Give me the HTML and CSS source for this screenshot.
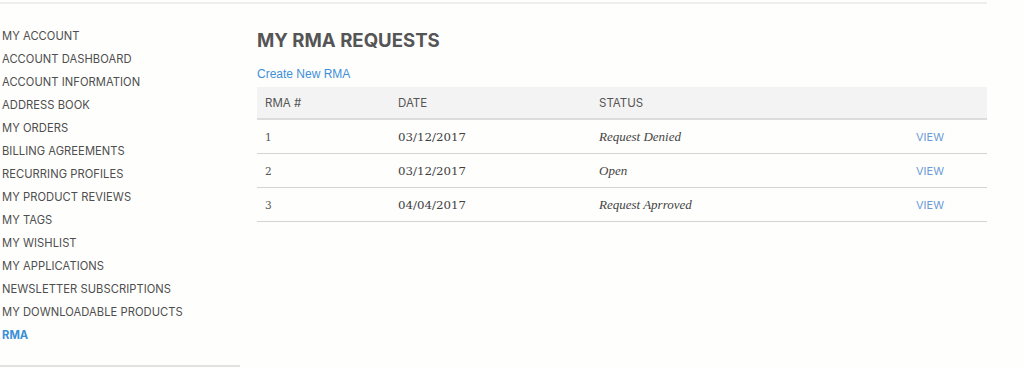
FILE: index.html
```html
<!DOCTYPE html>
<html>
<head>
<meta charset="utf-8">
<link rel="stylesheet" href="styles.css">
</head>
<body>
<div class="topline"></div>
<div class="page">
  <aside class="sidebar">
    <ul class="nav">
      <li>MY ACCOUNT</li>
      <li>ACCOUNT DASHBOARD</li>
      <li>ACCOUNT INFORMATION</li>
      <li>ADDRESS BOOK</li>
      <li>MY ORDERS</li>
      <li>BILLING AGREEMENTS</li>
      <li>RECURRING PROFILES</li>
      <li>MY PRODUCT REVIEWS</li>
      <li>MY TAGS</li>
      <li>MY WISHLIST</li>
      <li>MY APPLICATIONS</li>
      <li>NEWSLETTER SUBSCRIPTIONS</li>
      <li>MY DOWNLOADABLE PRODUCTS</li>
      <li class="active">RMA</li>
    </ul>
    <div class="sidebar-rule"></div>
  </aside>
  <main class="main">
    <h1 class="title">MY RMA REQUESTS</h1>
    <a class="create">Create New RMA</a>
    <table class="rma">
      <thead>
        <tr><th class="c1">RMA #</th><th class="c2">DATE</th><th class="c3">STATUS</th><th class="c4"></th></tr>
      </thead>
      <tbody>
        <tr><td class="num">1</td><td class="date">03/12/2017</td><td class="status">Request Denied</td><td class="view">VIEW</td></tr>
        <tr><td class="num">2</td><td class="date">03/12/2017</td><td class="status">Open</td><td class="view">VIEW</td></tr>
        <tr><td class="num">3</td><td class="date">04/04/2017</td><td class="status">Request Aprroved</td><td class="view">VIEW</td></tr>
      </tbody>
    </table>
  </main>
</div>
</body>
</html>
```
FILE: styles.css
```css
html, body {
  margin: 0;
  padding: 0;
  background: #fefefd;
}
body {
  font-family: "Inter", "Liberation Sans", sans-serif;
  color: #555;
}
.topline {
  width: 987px;
  height: 2px;
  margin-top: 2px;
  background: #eeeeee;
}
.page {
  display: flex;
  padding-top: 21px;
}
.sidebar {
  width: 240px;
  flex: none;
}
.nav {
  list-style: none;
  margin: 0;
  padding: 0 0 0 2px;
}
.nav li {
  font-size: 11.2px;
  line-height: 23px;
  height: 23px;
  color: #4e4e4e;
  letter-spacing: 0.05px;
}
.nav li.active {
  color: #3a8fd6;
  font-weight: 700;
}
.sidebar-rule {
  margin-top: 18px;
  height: 2px;
  background: #e2e2e2;
}
.main {
  margin-left: 17px;
  width: 730px;
}
.title {
  margin: 2px 0 0 0;
  font-size: 18.6px;
  line-height: 26px;
  font-weight: 700;
  color: #555;
  letter-spacing: 0;
}
.create {
  display: block;
  margin-top: 14px;
  font-family: "Liberation Sans", sans-serif;
  font-size: 12px;
  line-height: 14px;
  color: #3f8fd8;
}
.rma {
  margin-top: 6px;
  width: 730px;
  border-collapse: collapse;
  table-layout: fixed;
}
.rma th {
  background: #f3f3f3;
  text-align: left;
  font-weight: 400;
  font-size: 11.5px;
  color: #555;
  height: 31px;
  padding: 0 8px;
  border-bottom: 2px solid #dcdcdc;
}
.c1 { width: 117px; }
.c2 { width: 185px; }
.c3 { width: 301px; }
.c4 { width: 63px; }
.rma td {
  height: 33px;
  padding: 0 8px;
  border-bottom: 1px solid #d4d4d4;
  font-family: "DejaVu Serif", "Liberation Serif", serif;
  font-size: 10.5px;
  color: #555;
}
.rma td.date {
  font-size: 11.8px;
  color: #3f3f3f;
}
.rma td.status {
  font-style: italic;
  font-family: "Liberation Serif", serif;
  font-size: 13px;
  color: #444;
}
.rma td.view {
  font-family: "Inter", "Liberation Sans", sans-serif;
  font-size: 11px;
  color: #6b9bd6;
}
```
